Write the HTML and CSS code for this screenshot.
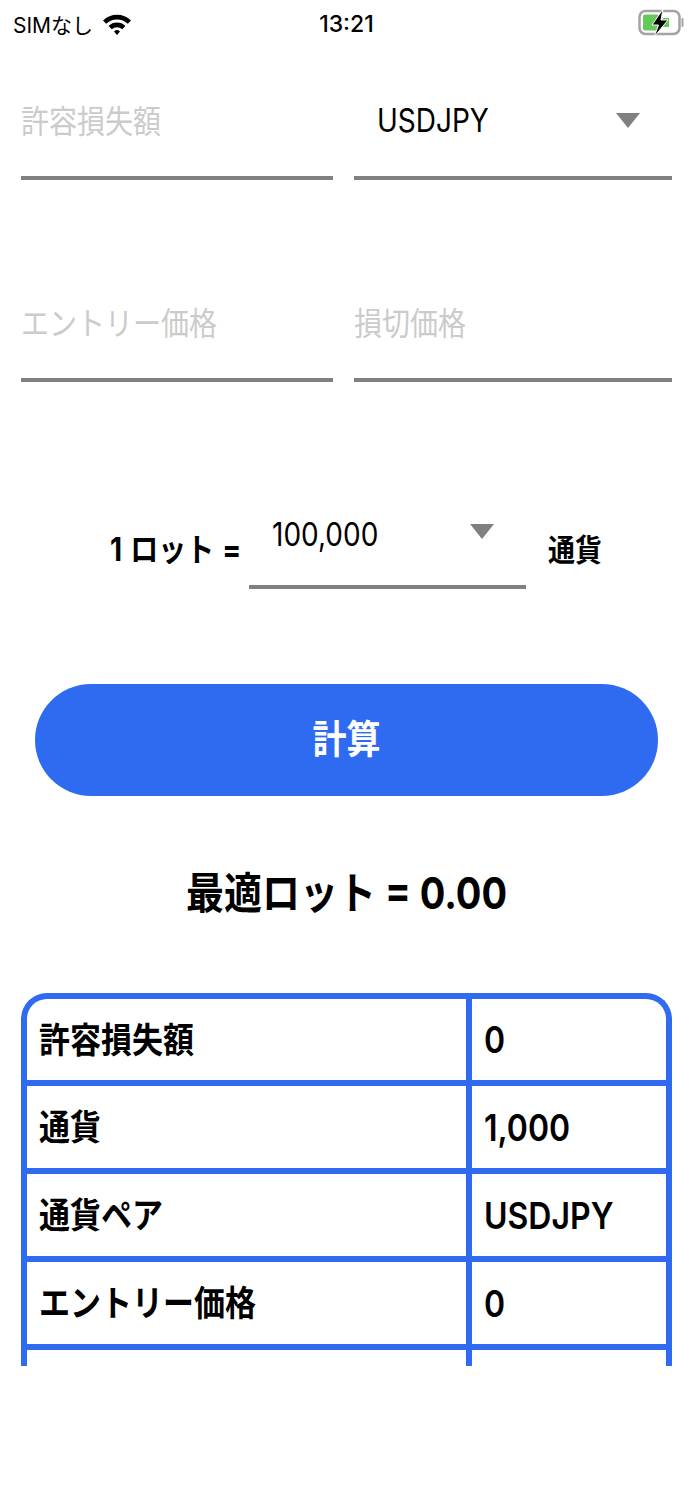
FILE: index.html
```html
<!DOCTYPE html>
<html lang="ja">
<head>
    <meta charset="UTF-8">
    <title>最適ロット計算</title>
    <link rel="stylesheet" href="styles.css">
</head>
<body>
    <div class="screen">
        <div class="status-bar">
            <div class="status-left">
                <span>SIMなし</span>
                <svg class="wifi" viewBox="0 0 30 24" width="30" height="24">
                    <path d="M1 8.500 A20 20 0 0 1 29 8.500 L25.800 11.800 A15.500 15.500 0 0 0 4.200 11.800 Z" fill="#000"/>
                    <path d="M6.600 14 A12 12 0 0 1 23.400 14 L20.200 17.300 A7.500 7.500 0 0 0 9.800 17.300 Z" fill="#000"/>
                    <path d="M12 19.500 A4.400 4.400 0 0 1 18 19.500 L15 23 Z" fill="#000"/>
                </svg>
            </div>
            <div class="status-time">13:21</div>
            <svg class="battery" viewBox="0 0 46 30" width="46" height="30">
                <rect x="1.500" y="3" width="40" height="23" rx="6" fill="#fff" stroke="#a3a3a3" stroke-width="2.500"/>
                <rect x="5" y="6.500" width="16" height="16" rx="2" fill="#63c957"/>
                <path d="M25 10 H31 V19 H22 Z" fill="#63c957"/>
                <rect x="43.500" y="10" width="2" height="9" rx="1" fill="#a3a3a3"/>
                <path d="M25 1 L14 17 H20.500 L16 29 L30 12 H23 Z" fill="#000" stroke="#fff" stroke-width="1"/>
            </svg>
        </div>

        <div class="field-row first-row">
            <div class="field field-loss"><span class="placeholder tall">許容損失額</span></div>
            <div class="field field-pair">
                <span class="value tall">USDJPY</span>
                <span class="caret"></span>
            </div>
        </div>
        <div class="field-row second-row">
            <div class="field field-loss"><span class="placeholder tall">エントリー価格</span></div>
            <div class="field field-pair stop"><span class="placeholder tall">損切価格</span></div>
        </div>

        <div class="lot-row">
            <span class="lot-label tall">1 ロット =</span>
            <div class="lot-select">
                <span class="lot-value tall">100,000</span>
                <span class="caret"></span>
            </div>
            <span class="lot-unit tall">通貨</span>
        </div>

        <button class="calc-button"><span class="tall">計算</span></button>

        <div class="result"><span class="tall">最適ロット = 0.00</span></div>

        <div class="table-clip">
            <div class="result-table">
                <div class="row"><div class="cell-name"><span class="tall">許容損失額</span></div><div class="cell-value"><span class="tall">0</span></div></div>
                <div class="row"><div class="cell-name"><span class="tall">通貨</span></div><div class="cell-value"><span class="tall">1,000</span></div></div>
                <div class="row"><div class="cell-name"><span class="tall">通貨ペア</span></div><div class="cell-value"><span class="tall">USDJPY</span></div></div>
                <div class="row"><div class="cell-name"><span class="tall">エントリー価格</span></div><div class="cell-value"><span class="tall">0</span></div></div>
                <div class="row"><div class="cell-name"></div><div class="cell-value"></div></div>
            </div>
        </div>
    </div>
</body>
</html>
```

FILE: styles.css
```css
* {
    box-sizing: border-box;
}
body {
    margin: 0;
    background: #fff;
    color: #000;
    font-family: Inter, "Noto Sans CJK JP", sans-serif;
}
.screen {
    width: 693px;
    height: 1500px;
    overflow: hidden;
}
/* the reference is stretched vertically, so the glyphs are taller than wide */
.tall {
    display: inline-block;
    transform: scaleY(1.15);
}
.status-bar {
    height: 48px;
    padding: 0 13px;
    display: flex;
    align-items: center;
    justify-content: space-between;
    position: relative;
}
.status-left {
    display: flex;
    align-items: center;
    gap: 9px;
    font-size: 21px;
}
.status-time {
    position: absolute;
    left: 0;
    right: 0;
    text-align: center;
    font-size: 23px;
    font-weight: 500;
}
.battery {
    margin: 0 -4px 2px 0;
}
.field-row {
    display: flex;
    gap: 21px;
    padding: 0 21px;
}
.second-row {
    margin-top: 70px;
}
.field {
    height: 132px;
    border-bottom: 4px solid #808080;
    display: flex;
    align-items: center;
    justify-content: space-between;
    padding-top: 14px;
    font-size: 28px;
}
.field-loss {
    width: 312px;
}
.field-pair {
    width: 318px;
    padding-left: 23px;
    padding-right: 32px;
}
.field-pair .value {
    margin-top: 3px;
}
.field-pair .caret {
    margin-top: 3px;
}
.field-pair.stop {
    padding-left: 0;
}
.placeholder {
    color: #cbcbcb;
}
.caret {
    width: 0;
    height: 0;
    border-left: 12px solid transparent;
    border-right: 12px solid transparent;
    border-top: 15px solid #808080;
}
.lot-row {
    margin-top: 115px;
    height: 92px;
    display: flex;
    align-items: center;
    padding-left: 110px;
}
.lot-label {
    width: 139px;
    font-size: 28px;
    font-weight: 700;
    word-spacing: 1.5px;
    white-space: nowrap;
    margin-top: 8px;
}
.lot-select {
    width: 277px;
    height: 92px;
    border-bottom: 4px solid #808080;
    display: flex;
    justify-content: space-between;
    padding: 23px 32px 0 23px;
    font-size: 28px;
}
.lot-select .caret {
    margin-top: 4px;
}
.lot-unit {
    margin-left: 22px;
    margin-top: 8px;
    font-size: 27px;
    font-weight: 700;
}
.calc-button {
    display: block;
    width: 623px;
    height: 112px;
    margin: 95px 0 0 35px;
    padding: 0 0 8px;
    border: none;
    border-radius: 56px;
    background: #2e6bf0;
    color: #fff;
    font-family: inherit;
    font-size: 34px;
    font-weight: 700;
}
.result {
    margin-top: 68px;
    text-align: center;
    font-size: 38px;
    line-height: 58px;
    font-weight: 700;
}
.table-clip {
    margin: 71px 21px 0;
    height: 373px;
    overflow: hidden;
}
.result-table {
    border: 6px solid #2e6bf0;
    border-bottom: none;
    border-radius: 26px 26px 0 0;
    overflow: hidden;
}
.row {
    display: flex;
    height: 88px;
    border-bottom: 6px solid #2e6bf0;
    font-size: 31px;
    font-weight: 600;
}
.row:first-child {
    height: 87px;
}
.cell-name {
    width: 445px;
    padding: 0 0 5px 12px;
    border-right: 6px solid #2e6bf0;
    display: flex;
    align-items: center;
    font-weight: 700;
}
.cell-value {
    padding-left: 12px;
    display: flex;
    align-items: center;
    font-size: 32px;
}
```
